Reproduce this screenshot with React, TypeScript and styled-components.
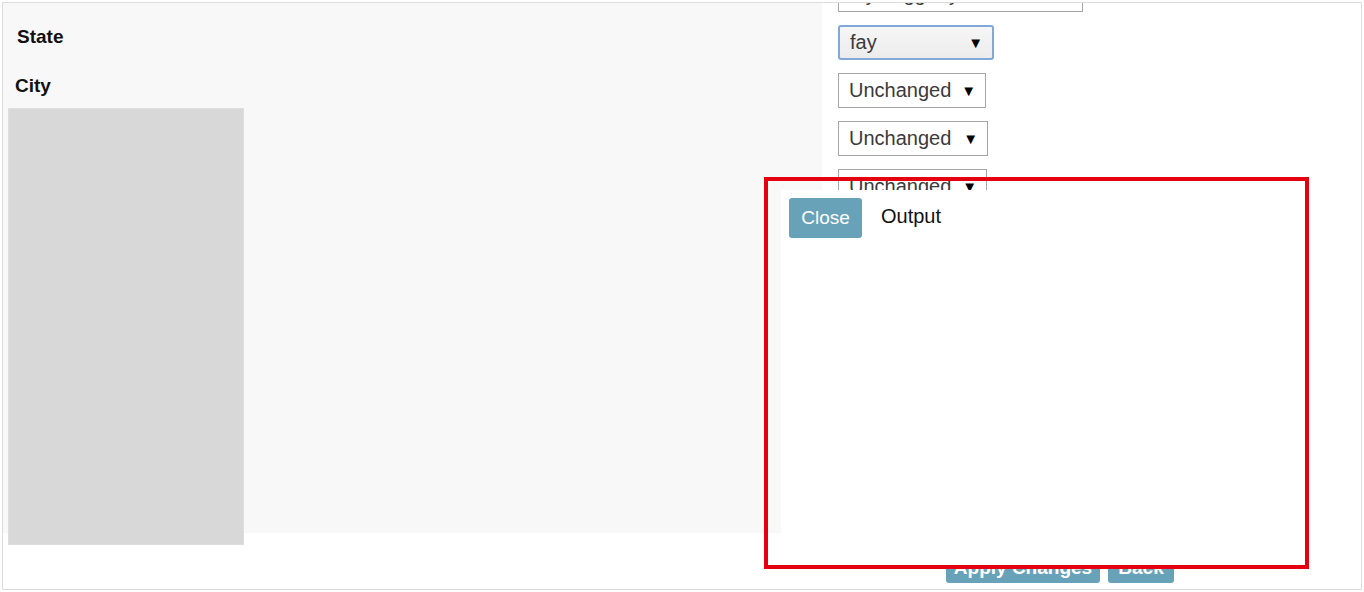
import React from "react";
import styled, { createGlobalStyle } from "styled-components";

const GlobalStyle = createGlobalStyle`
  body {
    margin: 0;
    background: #ffffff;
    font-family: "Liberation Sans", Arial, sans-serif;
  }
`;

const Frame = styled.div`
  position: relative;
  margin: 2px 0 0 2px;
  width: 1360px;
  height: 588px;
  box-sizing: border-box;
  border: 1px solid #dcdcdc;
  display: flex;
  overflow: hidden;
`;

const LeftPane = styled.div`
  flex: none;
  width: 819px;
`;

const FilterPanel = styled.div`
  height: 530px;
  box-sizing: border-box;
  background: #f8f8f8;
  padding: 22px 0 0 5px;
`;

const Label = styled.div<{ $indent: number }>`
  font-size: 19px;
  line-height: 24px;
  font-weight: bold;
  color: #111;
  padding-left: ${(p) => p.$indent}px;
  margin-bottom: 25px;
`;

const ListBox = styled.div`
  width: 236px;
  height: 437px;
  margin-top: -15px;
  background: #d8d8d8;
  box-shadow: inset 0 0 0 1px #dedede;
`;

const RightPane = styled.div`
  flex: 1;
  display: flex;
  flex-direction: column;
  padding-left: 16px;
  background: #ffffff;
`;

const SelectList = styled.div`
  display: flex;
  flex-direction: column;
  gap: 13px;
  margin-top: -26px;
`;

const FakeSelect = styled.div<{ $width: number; $focused?: boolean }>`
  width: ${(p) => p.$width}px;
  height: 35px;
  box-sizing: border-box;
  display: flex;
  align-items: center;
  justify-content: space-between;
  padding: 0 9px 0 10px;
  font-size: 20px;
  color: #3a3a3a;
  border: ${(p) => (p.$focused ? "2px solid #80a9da" : "1px solid #a6a6a6")};
  border-radius: ${(p) => (p.$focused ? "3px" : "0")};
  background: ${(p) => (p.$focused ? "linear-gradient(#f6f6f6, #ececec)" : "#ffffff")};
`;

const Arrow = styled.span`
  font-size: 15px;
  color: #000;
`;

const ButtonRow = styled.div`
  margin-top: auto;
  margin-bottom: 6px;
  padding-left: 108px;
  display: flex;
  gap: 8px;
`;

const ActionButton = styled.button<{ $width: number }>`
  width: ${(p) => p.$width}px;
  height: 30px;
  border: none;
  border-radius: 3px;
  background: #68a2b9;
  color: #fff;
  font-family: "Liberation Sans", Arial, sans-serif;
  font-size: 19px;
  font-weight: bold;
  padding: 0;
`;

const Modal = styled.div`
  position: absolute;
  left: 778px;
  top: 187px;
  width: 528px;
  height: 377px;
  background: #ffffff;
  display: flex;
  align-items: flex-start;
  gap: 19px;
  padding: 8px 0 0 8px;
  box-sizing: border-box;
`;

const CloseButton = styled.button`
  width: 73px;
  height: 40px;
  border: none;
  border-radius: 3px;
  background: #68a2b9;
  color: #ffffff;
  font-family: "Liberation Sans", Arial, sans-serif;
  font-size: 19px;
  padding: 0;
`;

const ModalTitle = styled.div`
  margin-top: 7px;
  font-size: 20px;
  color: #111;
`;

const Highlight = styled.div`
  position: absolute;
  left: 761px;
  top: 174px;
  width: 545px;
  height: 392px;
  box-sizing: border-box;
  border: 4px solid #e4000e;
  pointer-events: none;
`;

const selects = [
  { text: "fay haggerty", width: 245 },
  { text: "fay", width: 156, focused: true },
  { text: "Unchanged", width: 148 },
  { text: "Unchanged", width: 150 },
  { text: "Unchanged", width: 149 },
];

export default function App() {
  return (
    <>
      <GlobalStyle />
      <Frame>
        <LeftPane>
          <FilterPanel>
            <Label $indent={9}>State</Label>
            <Label $indent={7}>City</Label>
            <ListBox />
          </FilterPanel>
        </LeftPane>
        <RightPane>
          <SelectList>
            {selects.map((s, i) => (
              <FakeSelect key={i} $width={s.width} $focused={s.focused}>
                <span>{s.text}</span>
                <Arrow>▼</Arrow>
              </FakeSelect>
            ))}
          </SelectList>
          <ButtonRow>
            <ActionButton $width={154}>Apply Changes</ActionButton>
            <ActionButton $width={66}>Back</ActionButton>
          </ButtonRow>
        </RightPane>
        <Modal>
          <CloseButton>Close</CloseButton>
          <ModalTitle>Output</ModalTitle>
        </Modal>
        <Highlight />
      </Frame>
    </>
  );
}
